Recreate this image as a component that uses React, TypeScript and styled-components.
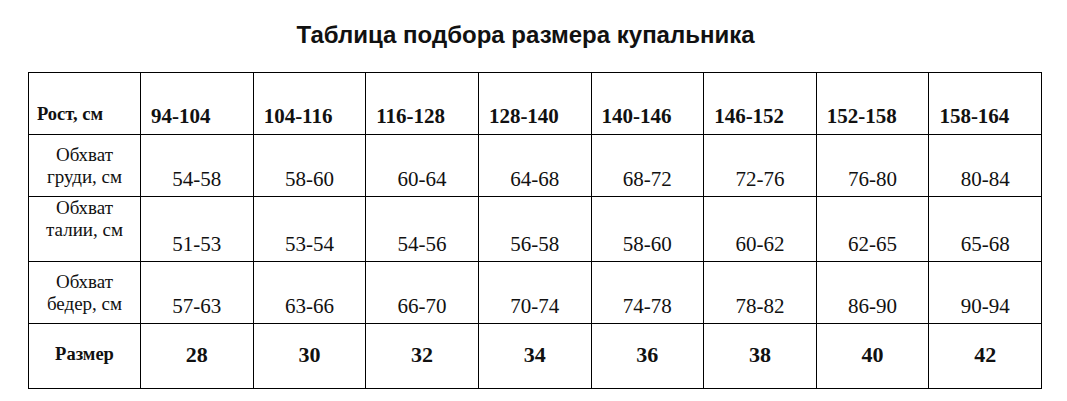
import React from "react";
import styled, { createGlobalStyle } from "styled-components";

const Global = createGlobalStyle`
  html, body { margin: 0; padding: 0; background: #fff; }
  body { width: 1067px; height: 401px; overflow: hidden; }
`;

const Page = styled.div`
  width: 1067px;
  height: 401px;
  padding-top: 20px;
  box-sizing: border-box;
`;

const Title = styled.h1`
  margin: 0;
  height: 52px;
  padding-right: 16px;
  text-align: center;
  font-family: "Liberation Sans", Arial, sans-serif;
  font-weight: bold;
  font-size: 24px;
  line-height: 30px;
  color: #111;
`;

const Table = styled.table`
  margin-left: 28px;
  width: 1014px;
  border-collapse: collapse;
  table-layout: fixed;
  font-family: "Liberation Serif", "Times New Roman", serif;
  color: #111;
`;

const Row = styled.tr<{ $h: number }>`
  height: ${(p) => p.$h}px;
`;

const HeadCell = styled.td<{ $first?: boolean }>`
  border: 1.5px solid #000;
  padding: 0 0 ${(p) => (p.$first ? 9 : 7)}px ${(p) => (p.$first ? 8 : 10)}px;
  vertical-align: bottom;
  text-align: left;
  font-weight: bold;
  font-size: ${(p) => (p.$first ? 18.5 : 21)}px;
  line-height: 22px;
  white-space: nowrap;
`;

const LabelCell = styled.td<{ $top: number }>`
  border: 1.5px solid #000;
  padding: ${(p) => p.$top}px 0 0 0;
  vertical-align: top;
  text-align: center;
  font-size: 19px;
  line-height: 22px;
  white-space: nowrap;
`;

const ValueCell = styled.td`
  border: 1.5px solid #000;
  padding: 0 0 6px 0;
  vertical-align: bottom;
  text-align: center;
  font-size: 21px;
  line-height: 22px;
`;

const SizeCell = styled.td<{ $label?: boolean }>`
  border: 1.5px solid #000;
  padding: 0 0 ${(p) => (p.$label ? 4 : 2)}px 0;
  vertical-align: middle;
  text-align: center;
  font-weight: bold;
  font-size: ${(p) => (p.$label ? 18.5 : 22)}px;
`;

const heights = ["94-104", "104-116", "116-128", "128-140", "140-146", "146-152", "152-158", "158-164"];
const rows = [
  { label: ["Обхват", "груди, см"], top: 9, values: ["54-58", "58-60", "60-64", "64-68", "68-72", "72-76", "76-80", "80-84"], h: 62 },
  { label: ["Обхват", "талии, см"], top: 0, values: ["51-53", "53-54", "54-56", "56-58", "58-60", "60-62", "62-65", "65-68"], h: 65 },
  { label: ["Обхват", "бедер, см"], top: 9, values: ["57-63", "63-66", "66-70", "70-74", "74-78", "78-82", "86-90", "90-94"], h: 62 },
];
const sizes = ["28", "30", "32", "34", "36", "38", "40", "42"];

export default function App() {
  return (
    <Page>
      <Global />
      <Title>Таблица подбора размера купальника</Title>
      <Table>
        <colgroup>
          <col style={{ width: 112 }} />
          {heights.map((h) => (
            <col key={h} />
          ))}
        </colgroup>
        <tbody>
          <Row $h={62}>
            <HeadCell $first>Рост, см</HeadCell>
            {heights.map((h) => (
              <HeadCell key={h}>{h}</HeadCell>
            ))}
          </Row>
          {rows.map((r) => (
            <Row $h={r.h} key={r.label[1]}>
              <LabelCell $top={r.top}>
                {r.label[0]}
                <br />
                {r.label[1]}
              </LabelCell>
              {r.values.map((v, i) => (
                <ValueCell key={i}>{v}</ValueCell>
              ))}
            </Row>
          ))}
          <Row $h={65}>
            <SizeCell $label>Размер</SizeCell>
            {sizes.map((s) => (
              <SizeCell key={s}>{s}</SizeCell>
            ))}
          </Row>
        </tbody>
      </Table>
    </Page>
  );
}
